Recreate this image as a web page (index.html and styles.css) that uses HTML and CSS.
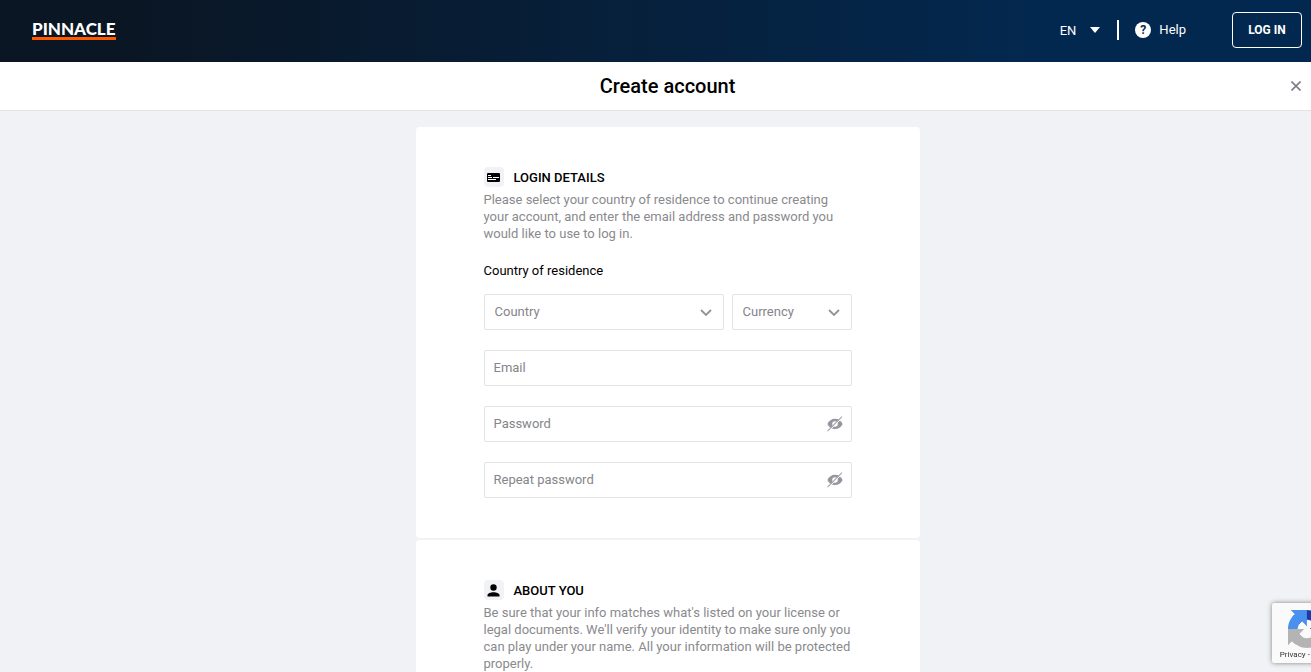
FILE: index.html
```html
<!DOCTYPE html>
<html lang="en">
<head>
  <meta charset="UTF-8">
  <meta name="viewport" content="width=device-width, initial-scale=1.0">
  <title>Create account</title>
  <link rel="stylesheet" href="styles.css">
</head>
<body>
  <header class="header">
    <a href="#" class="logo">PINNACLE</a>
    <nav class="nav">
      <button type="button" class="language">
        EN
        <svg width="10" height="6" viewBox="0 0 10 6"><path d="M0 0h10L5 6z" fill="#fff"/></svg>
      </button>
      <a href="#" class="help"><span class="help-icon">?</span>Help</a>
      <button type="button" class="login">LOG IN</button>
    </nav>
  </header>

  <div class="title-bar">
    <h1>Create account</h1>
    <button type="button" class="close" aria-label="Close">
      <svg width="10" height="10" viewBox="0 0 10 10"><path d="M0.5 0.5l9 9M9.5 0.5l-9 9" stroke="#7d7d87" stroke-width="1.6"/></svg>
    </button>
  </div>

  <main class="content">
    <form class="form">
      <section class="card">
        <h2>
          <span class="section-icon">
            <svg width="13" height="9" viewBox="0 0 13 9">
              <rect width="13" height="9" rx="1" fill="#000"/>
              <path d="M1 2.5h3M1 4.5h4M6 4.5h6M1 6.500h8" stroke="#fff" stroke-width="1"/>
            </svg>
          </span>
          LOGIN DETAILS
        </h2>
        <p>Please select your country of residence to continue creating your account, and enter the email address and password you would like to use to log in.</p>

        <label class="field-label" for="country">Country of residence</label>
        <div class="row">
          <div class="field country">
            <select id="country"><option>Country</option></select>
            <svg class="chevron" width="12" height="7" viewBox="0 0 12 7"><path d="M1 1l5 5 5-5" fill="none" stroke="#92929c" stroke-width="1.8"/></svg>
          </div>
          <div class="field currency">
            <select aria-label="Currency"><option>Currency</option></select>
            <svg class="chevron" width="12" height="7" viewBox="0 0 12 7"><path d="M1 1l5 5 5-5" fill="none" stroke="#92929c" stroke-width="1.8"/></svg>
          </div>
        </div>
        <div class="field">
          <input type="email" placeholder="Email" aria-label="Email">
        </div>
        <div class="field">
          <input type="password" placeholder="Password" aria-label="Password">
          <button type="button" class="eye" aria-label="Show password">
            <svg width="16" height="16" viewBox="0 0 16 16">
              <path fill-rule="evenodd" d="M8 2.8c-3.4 0-6.2 2-7.6 5.1 1.4 3.2 4.2 5.2 7.6 5.2s6.2-2 7.6-5.2C14.2 4.8 11.4 2.8 8 2.8zM8 5.200a2.800 2.800 0 1 1 0 5.600 2.800 2.800 0 0 1 0-5.600z" fill="#9696a0"/>
              <path d="M1.500 15.500L16 1" stroke="#fff" stroke-width="1"/>
              <path d="M0.500 15.200L15 0.700" stroke="#a8a8a8" stroke-width="1.200"/>
            </svg>
          </button>
        </div>
        <div class="field">
          <input type="password" placeholder="Repeat password" aria-label="Repeat password">
          <button type="button" class="eye" aria-label="Show repeated password">
            <svg width="16" height="16" viewBox="0 0 16 16">
              <path fill-rule="evenodd" d="M8 2.8c-3.4 0-6.2 2-7.6 5.1 1.4 3.2 4.2 5.2 7.6 5.2s6.2-2 7.6-5.2C14.2 4.8 11.4 2.8 8 2.8zM8 5.200a2.800 2.800 0 1 1 0 5.600 2.800 2.800 0 0 1 0-5.600z" fill="#9696a0"/>
              <path d="M1.500 15.500L16 1" stroke="#fff" stroke-width="1"/>
              <path d="M0.500 15.200L15 0.700" stroke="#a8a8a8" stroke-width="1.200"/>
            </svg>
          </button>
        </div>
      </section>

      <section class="card">
        <h2>
          <span class="section-icon">
            <svg width="13" height="13" viewBox="0 0 13 13">
              <circle cx="6.5" cy="3.5" r="3.2" fill="#000"/>
              <path d="M0.5 12.5v-1.500c0-1.500 3-2.800 6-2.800s6 1.300 6 2.800v1.500z" fill="#000"/>
            </svg>
          </span>
          ABOUT YOU
        </h2>
        <p>Be sure that your info matches what's listed on your license or legal documents. We'll verify your identity to make sure only you can play under your name. All your information will be protected properly.</p>
      </section>
    </form>
  </main>

  <div class="captcha">
    <div class="captcha-inner">
      <svg width="38" height="38" viewBox="0 0 64 64">
        <path d="M64 31.955l-.033-1.370V4.687l-7.160 7.160C50.948 4.674 42.033.093 32.050.093c-10.400 0-19.622 4.960-25.458 12.640l11.736 11.860a15.550 15.550 0 0 1 4.754-5.334c2.050-1.600 4.952-2.906 8.968-2.906.485 0 .860.057 1.135.163 4.976.393 9.288 3.140 11.828 7.124l-8.307 8.307L64 31.953" fill="#1c3aa9"/>
        <path d="M31.862.094l-1.370.033H4.594l7.160 7.160C4.580 13.147 0 22.060 0 32.046c0 10.400 4.960 19.622 12.640 25.458L24.500 45.768a15.550 15.550 0 0 1-5.334-4.754c-1.600-2.050-2.906-4.952-2.906-8.968 0-.485.057-.860.163-1.135.393-4.976 3.140-9.288 7.124-11.828l8.307 8.307L31.860.095" fill="#4a90ee"/>
        <path d="M.001 32.045l.033 1.370v25.898l7.160-7.160c5.860 7.173 14.774 11.754 24.760 11.754 10.400 0 19.622-4.960 25.458-12.640l-11.736-11.860a15.550 15.550 0 0 1-4.754 5.334c-2.050 1.600-4.952 2.906-8.968 2.906-.485 0-.860-.057-1.135-.163-4.976-.393-9.288-3.140-11.828-7.124l8.307-8.307L0 32.047" fill="#b4b4b4"/>
      </svg>
      <div class="captcha-links"><a href="#">Privacy</a> - <a href="#">Terms</a></div>
    </div>
  </div>
</body>
</html>
```

FILE: styles.css
```css
* {
  box-sizing: border-box;
}

body {
  display: flex;
  flex-direction: column;
  margin: 0;
  height: 100vh;
  overflow: hidden;
  font-family: Roboto, Arial, sans-serif;
  font-size: 13px;
  color: #000;
  background-color: #f1f2f6;
}

button {
  font-family: inherit;
  font-size: 13px;
  padding: 0;
  border: none;
  background: none;
  cursor: pointer;
}

svg {
  display: block;
}

.header {
  display: flex;
  flex-shrink: 0;
  align-items: center;
  justify-content: space-between;
  height: 62px;
  padding: 0 9px 2px 32px;
  background: linear-gradient(90deg, #0a1624 0%, #0a1624 10%, #03284f 80%, #03284f 100%);
}

.logo {
  border-bottom: 3px solid #ff5a00;
  color: #fff;
  font-family: Lato, sans-serif;
  font-size: 17px;
  font-weight: 900;
  line-height: 17px;
  text-decoration: none;
}

.nav {
  display: flex;
  align-items: center;
}

.language {
  display: flex;
  align-items: center;
  gap: 14px;
  height: 20px;
  padding-right: 17px;
  border-right: 2px solid #fff;
  color: #fff;
}

.help {
  display: flex;
  align-items: center;
  gap: 8px;
  margin: 0 46px 0 16px;
  color: #fff;
  line-height: 16px;
  text-decoration: none;
}

.help-icon {
  width: 16px;
  height: 16px;
  border-radius: 50%;
  background-color: #fff;
  color: #03284f;
  font-size: 12px;
  font-weight: bold;
  text-align: center;
}

.login {
  width: 70px;
  height: 36px;
  border: 1px solid #fff;
  border-radius: 4px;
  color: #fff;
  font-size: 12px;
  font-weight: bold;
}

.title-bar {
  position: relative;
  flex-shrink: 0;
  height: 49px;
  padding-left: 24px;
  border-bottom: 1px solid #e3e3e6;
  background-color: #fff;
}

h1 {
  margin: 0;
  font-size: 20px;
  font-weight: 500;
  line-height: 48px;
  text-align: center;
}

.close {
  position: absolute;
  top: 19px;
  right: 10px;
}

.content {
  flex: 1;
  min-height: 0;
  overflow-y: auto;
  padding: 16px 0 0 24px;
  scrollbar-width: none;
}

.form {
  max-width: 504px;
  margin: 0 auto;
}

.card {
  margin-bottom: 2px;
  padding: 40px 68px;
  border-radius: 4px;
  background-color: #fff;
}

h2 {
  display: flex;
  align-items: flex-start;
  gap: 10px;
  margin: 0 0 2px;
  font-size: 13px;
  font-weight: 500;
  line-height: 22px;
}

.section-icon {
  display: flex;
  align-items: center;
  justify-content: center;
  width: 20px;
  height: 20px;
  border-radius: 4px;
  background-color: #f1f2f6;
}

p {
  margin: 0;
  color: #8a8a8e;
  line-height: 17px;
}

.field-label {
  display: block;
  margin: 20px 0 15px;
  line-height: 17px;
}

.row {
  display: flex;
  gap: 8px;
}

.field {
  position: relative;
  margin-top: 20px;
}

.row .field {
  margin-top: 0;
}

.country {
  flex: 1;
}

.currency {
  width: 120px;
}

input,
select {
  display: block;
  width: 100%;
  height: 36px;
  padding: 0 9px 2px;
  border: 1px solid #e3e3e6;
  border-radius: 2px;
  background-color: #fff;
  color: #85858a;
  font-family: inherit;
  font-size: 13px;
  appearance: none;
}

select {
  padding-left: 10px;
}

input::placeholder {
  color: #85858a;
}

.chevron {
  position: absolute;
  top: 15px;
  right: 12px;
  pointer-events: none;
}

.eye {
  position: absolute;
  top: 10px;
  right: 9px;
}

/* recaptcha badge, mostly off screen */
.captcha {
  position: fixed;
  right: -217px;
  bottom: 9px;
  width: 256px;
  height: 60px;
  border-radius: 2px;
  background-color: #fafafa;
  box-shadow: 0 0 5px #808080;
}

.captcha-inner {
  display: flex;
  flex-direction: column;
  align-items: center;
  width: 70px;
  padding-top: 7px;
}

.captcha-links {
  font-size: 8px;
  line-height: 14px;
  color: #333;
}

.captcha-links a {
  color: #333;
  text-decoration: none;
}
```
